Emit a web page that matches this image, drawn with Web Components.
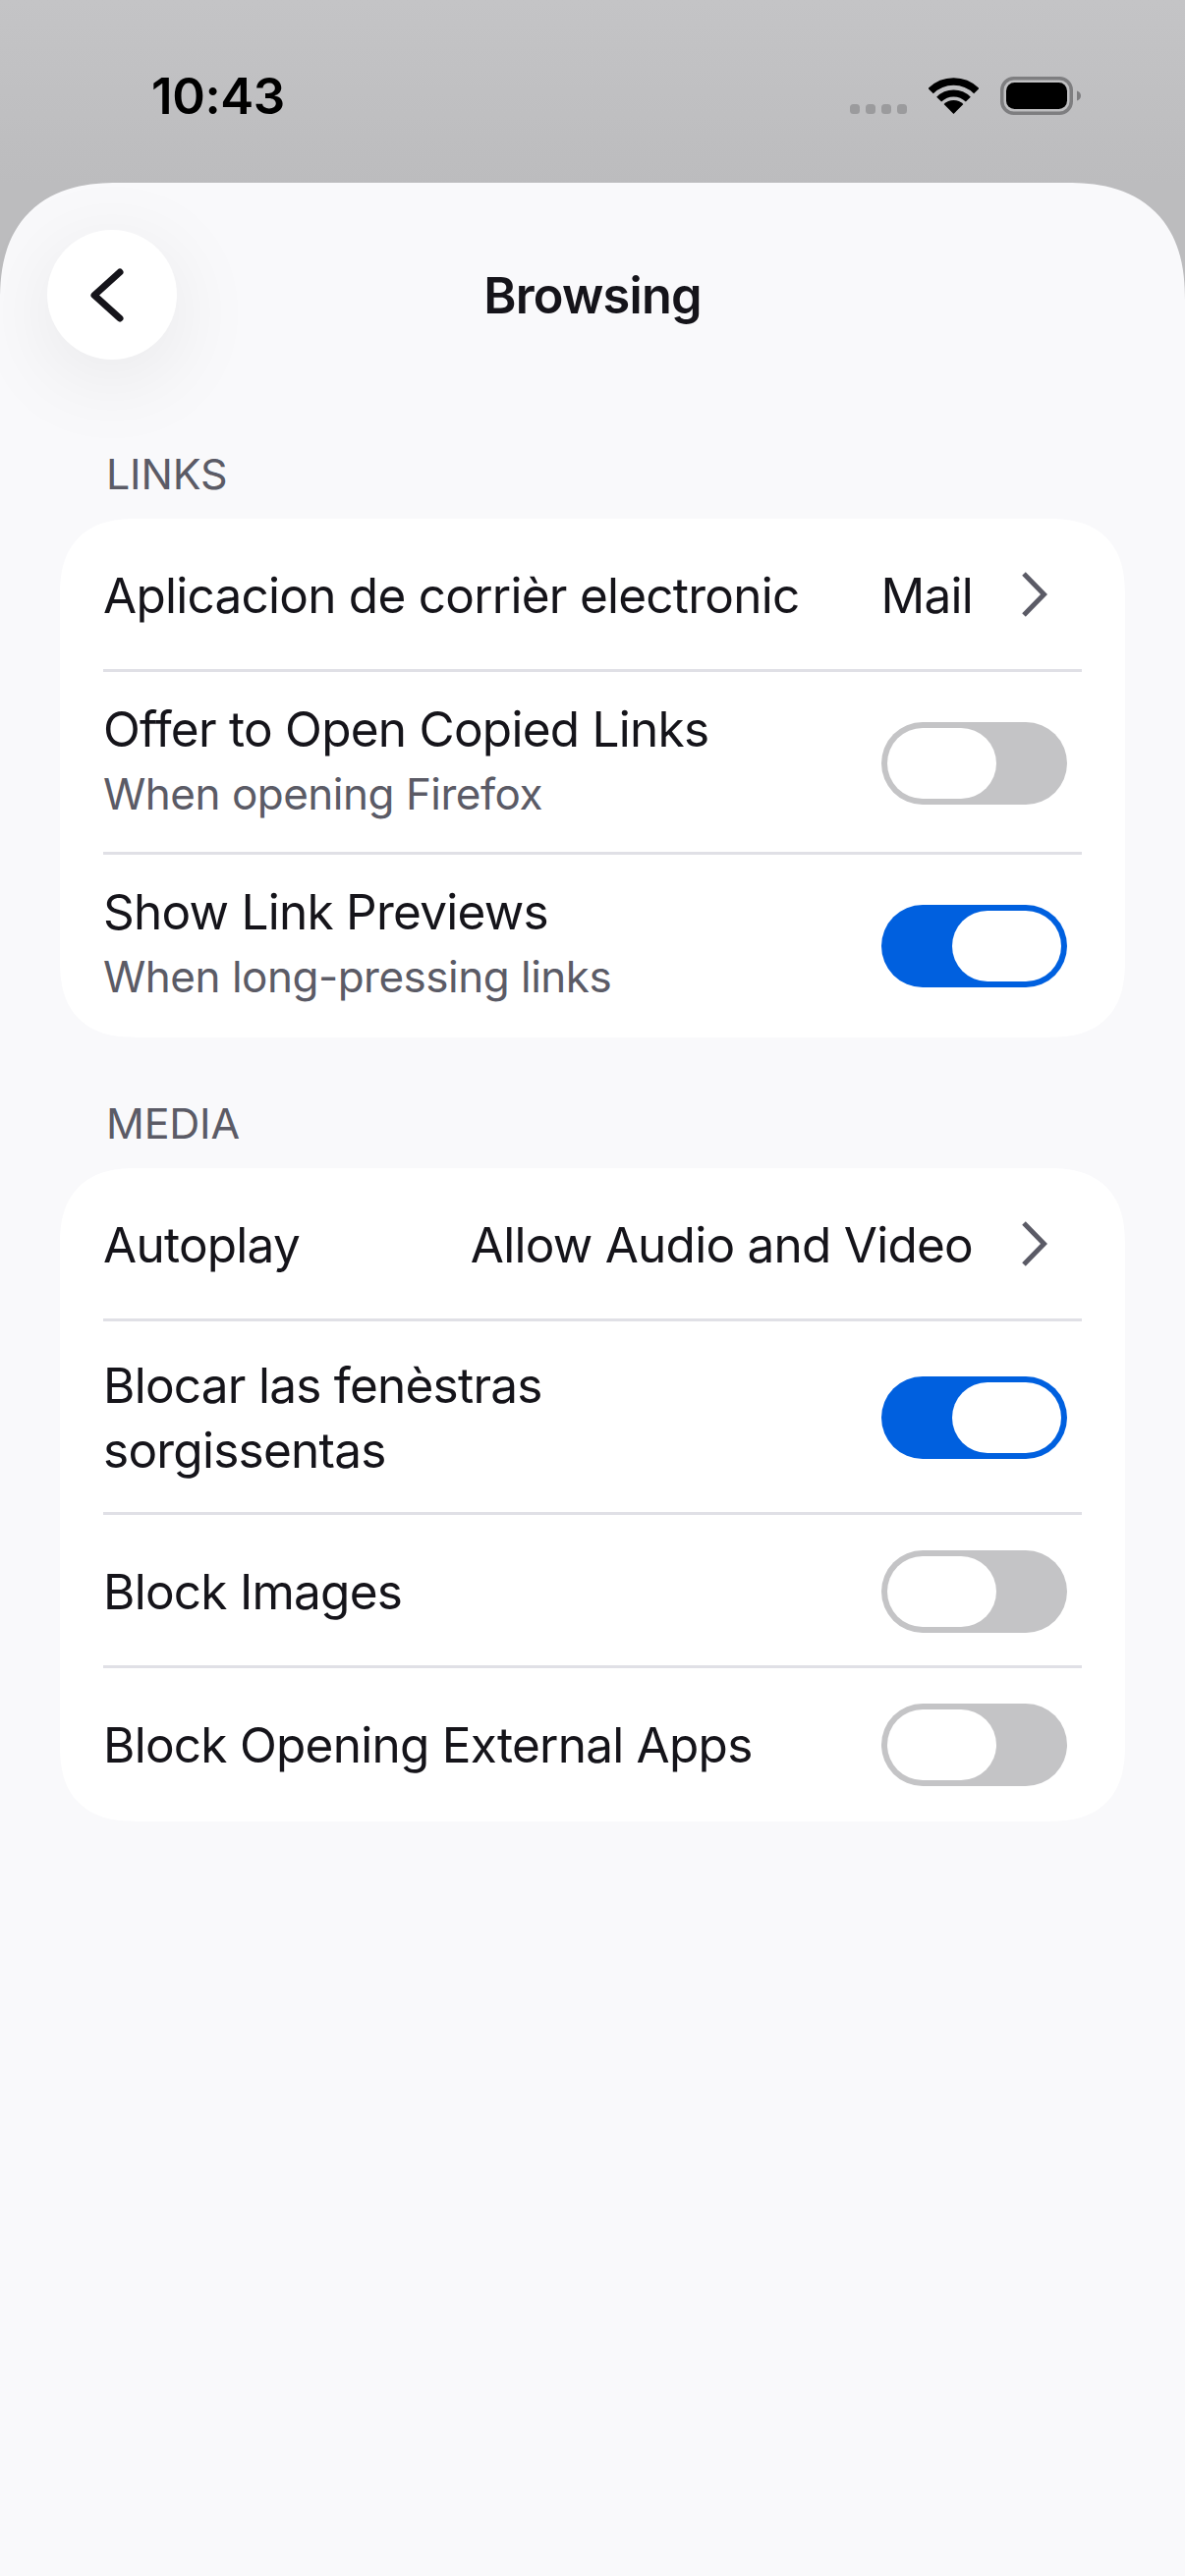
<!DOCTYPE html>
<html lang="oc">
<head>
<meta charset="utf-8">
<title>Browsing</title>
<style>
html,body{margin:0;padding:0}
body{width:1206px;height:2622px;overflow:hidden;display:flex;flex-direction:column;
background:linear-gradient(#c4c4c6 0,#bcbcbe 186px);font-family:Inter,"Noto Sans",sans-serif;color:#15141a}
</style>
</head>
<body>
<status-bar></status-bar>
<settings-sheet>
  <nav-header title-text="Browsing"></nav-header>
  <settings-section heading="LINKS" first>
    <setting-row label="Aplicacion de corrièr electronic" value="Mail"></setting-row>
    <setting-row label="Offer to Open Copied Links" sub="When opening Firefox" toggle="off"></setting-row>
    <setting-row label="Show Link Previews" sub="When long-pressing links" toggle="on"></setting-row>
  </settings-section>
  <settings-section heading="MEDIA">
    <setting-row label="Autoplay" value="Allow Audio and Video"></setting-row>
    <setting-row label="Blocar las fenèstras sorgissentas" toggle="on"></setting-row>
    <setting-row label="Block Images" toggle="off"></setting-row>
    <setting-row label="Block Opening External Apps" toggle="off"></setting-row>
  </settings-section>
</settings-sheet>
<script>
function define(name, css, html){
  customElements.define(name, class extends HTMLElement{
    connectedCallback(){
      if(this.shadowRoot) return;
      const r=this.attachShadow({mode:'open'});
      r.innerHTML='<style>'+css+'</style>'+(typeof html==='function'?html(this):html);
    }
  });
}
const esc=s=>String(s).replace(/&/g,'&amp;').replace(/</g,'&lt;');

define('status-bar',`
:host{display:flex;flex:none;height:186px;box-sizing:border-box;padding:0 106px 0 154px;align-items:flex-start;justify-content:space-between}
.t{font-size:51px;font-weight:600;line-height:60px;margin-top:68px;letter-spacing:-.4px;color:#000}
.ic{display:flex;align-items:flex-start;margin-top:78px}
.dots{display:flex;gap:6px;margin-top:28px;margin-right:22px}
.dots i{width:10px;height:10px;border-radius:3.5px;background:#9b9b9d}
svg{display:block}
.wifi{margin-top:1px;margin-right:22px}
`,`<span class="t">10:43</span>
<div class="ic">
<div class="dots"><i></i><i></i><i></i><i></i></div>
<svg class="wifi" width="51" height="37" viewBox="0 0 51 37"><g fill="none" stroke="#000"><path stroke-width="7.5" d="M2.2 13.7A33 33 0 0 1 48.8 13.7"/><path stroke-width="7" d="M10.65 22.15A21 21 0 0 1 40.35 22.15"/></g><path d="M25.5 37L15.6 27.1A14 14 0 0 1 35.4 27.1Z"/></svg>
<svg width="82" height="39" viewBox="0 0 82 39"><rect x="1.75" y="1.75" width="70.5" height="35.5" rx="12" fill="none" stroke="#7e7e80" stroke-width="3.5"/><rect x="6" y="6" width="62" height="27" rx="8.5"/><path d="M78 14.5c2.4.7 4 2.6 4 5s-1.600 4.300-4 5z" fill="#7e7e80"/></svg>
</div>`);

define('settings-sheet',`
:host{display:block;flex:1;background:#f9f9fb;border-radius:120px 120px 0 0;corner-shape:superellipse(1.27)}
`,`<slot></slot>`);

define('nav-header',`
:host{display:grid;grid-template-columns:132px 1fr 132px;align-items:center;padding:48px 48px 0;height:132px}
.b{width:132px;height:132px;border-radius:50%;background:#fff;box-shadow:0 18px 90px rgba(0,0,0,.08);display:flex}
h1{margin:2px 0 0;text-align:center;font-size:50.5px;font-weight:600;line-height:60px;letter-spacing:-.8px;color:#15141a}
svg{display:block}
`,el=>`<div class="b" role="button" aria-label="Back"><svg width="132" height="132" viewBox="0 0 132 132"><path d="M74 43L48 66.500L74 90" fill="none" stroke="#15141a" stroke-width="7" stroke-linecap="round" stroke-linejoin="round"/></svg></div>
<h1>${esc(el.getAttribute('title-text'))}</h1><span></span>`);

define('settings-section',`
:host{display:block}
h2{margin:0;height:133px;box-sizing:border-box;display:flex;align-items:flex-end;padding:0 0 21px 108px;font-size:43px;line-height:50px;font-weight:400;color:#5b5b66;letter-spacing:-.2px}
:host([first]) h2{height:162px}
.card{margin:0 61px;background:#fff;border-radius:78px;corner-shape:superellipse(1.3);overflow:hidden}
`,el=>`<h2>${esc(el.getAttribute('heading'))}</h2><div class="card"><slot></slot></div>`);

define('toggle-switch',`
:host{display:block;flex:none;width:189px;height:84px;box-sizing:border-box;padding:6px;border-radius:42px;background:#c4c4c6;margin-right:15px;margin-top:2px}
:host([on]){background:#0060df}
:host([nudge]){margin-top:3px}
i{display:block;width:111px;height:72px;border-radius:36px;background:#fff}
:host([on]) i{margin-left:66px}
`,`<i></i>`);

define('setting-row',`
:host{display:block}
.r{display:flex;align-items:center;justify-content:space-between;gap:36px;min-height:156px;box-sizing:border-box;margin:0 44px;padding:31px 0;border-bottom:3px solid #e0e0e6}
:host(:last-child) .r{border-bottom-color:transparent}
.txt{min-width:0;max-width:700px}
.wide{max-width:none}
.l{font-size:49.5px;line-height:66px;letter-spacing:-.75px;color:#15141a;position:relative;top:1px}
.withsub .l{top:-6px}
.s{font-size:44px;line-height:55px;letter-spacing:-.5px;color:#5b5b66}
.v{display:flex;align-items:center;flex:none}
.val{font-size:49.5px;line-height:66px;letter-spacing:-.75px;color:#15141a;white-space:nowrap;position:relative;top:1px}
svg{display:block;margin:0 35px 0 49px}
`,el=>{
  const t=el.getAttribute('toggle'),v=el.getAttribute('value'),s=el.getAttribute('sub');
  return `<div class="r"><div class="txt${t?'':' wide'}${s?' withsub':''}"><div class="l">${esc(el.getAttribute('label'))}</div>${s?`<div class="s">${esc(s)}</div>`:''}</div>`+
  (v?`<div class="v"><span class="val">${esc(v)}</span><svg width="27" height="46" viewBox="0 0 27 46"><path d="M3 2L23.500 23L3 44" fill="none" stroke="#5b5b66" stroke-width="5"/></svg></div>`:'')+
  (t?`<toggle-switch${t==='on'?' on':''}${s?' nudge':''}></toggle-switch>`:'')+`</div>`;
});
</script>
</body>
</html>
